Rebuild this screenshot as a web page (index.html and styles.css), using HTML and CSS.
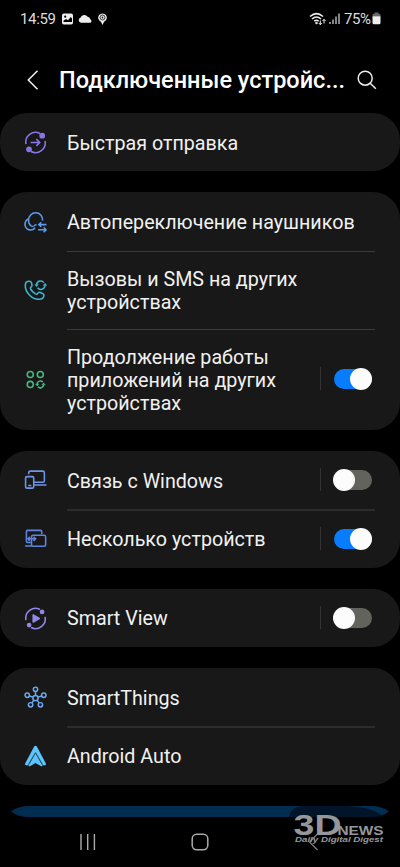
FILE: index.html
```html
<!DOCTYPE html>
<html lang="ru">
<head>
<meta charset="utf-8">
<title>Подключенные устройства</title>
<link rel="stylesheet" href="styles.css">
</head>
<body>
<div class="screen">
  <div class="status">
    <span class="clock">14:59</span>
    <svg class="status-left" width="48" height="14" viewBox="0 0 48 14">
      <rect x="1" y="1.5" width="11" height="11" rx="1.8" fill="#eee"/>
      <circle cx="4.2" cy="4.7" r="1.1" fill="#000"/>
      <path d="M2.5 10V8.700L5 7l2 1.300L9.800 5l1.200 1.400V10Z" fill="#000"/>
      <path d="M20 10.800a2.600 2.600 0 0 1-.6-5 4 4 0 0 1 7.200-1 3 3 0 0 1 2.700 2.500a2 2 0 0 1 .2 3.500Z" fill="#eee"/>
      <path d="M41.500 13l-1.600-3.300a4.300 4.300 0 1 1 3.200 0Z" fill="#eee"/>
      <circle cx="41.500" cy="5.500" r="2.500" fill="none" stroke="#222" stroke-width=".9"/>
      <circle cx="41.500" cy="5.500" r=".9" fill="#222"/>
    </svg>
    <svg class="status-right" width="33" height="14" viewBox="0 0 33 14" fill="none" stroke="#eee" stroke-width="1.500">
      <path d="M1 4.500Q7.500-1.200 14 4.500M3 7Q7.500 3 12 7M5.200 9.200Q7.500 7.300 9.700 9.200"/>
      <circle cx="7.500" cy="11" r=".5"/>
      <path d="M11.300 8.500v4M9.800 11l1.500 1.700 1.500-1.700M15 11.500v-4M13.500 9l1.500-1.700L16.500 9" stroke-width="1"/>
      <path d="M21 12v-2M24 12V7.500M27 12V4.500M30 12V1.500" stroke-width="1.400" stroke="#bbb"/>
    </svg>
    <span class="percent">75%</span>
    <svg class="battery" width="9" height="13" viewBox="0 0 9 13">
      <path d="M.5 4.500V3Q.5 1.800 2 1.800h.5V.5h4v1.300H7Q8.500 1.800 8.500 3v1.500Z" fill="#666"/>
      <path d="M.5 4.300h8v6.500Q8.500 12.300 7 12.300H2Q.5 12.300.5 10.800Z" fill="#eee"/>
    </svg>
  </div>

  <header class="header">
    <svg width="12" height="20" viewBox="0 0 12 20" fill="none" stroke="#f2f2f2" stroke-width="1.500"><path d="M10.500.8 1.300 10l9.200 9.200"/></svg>
    <h1>Подключенные устройс...</h1>
    <svg class="search" width="20" height="20" viewBox="0 0 20 20" fill="none" stroke="#eee" stroke-width="1.500"><circle cx="8.200" cy="8.200" r="7"/><path d="m13.200 13.200 5.600 5.600"/></svg>
  </header>

  <main class="groups">
    <section class="card">
      <div class="row">
        <svg class="icon" viewBox="0 0 22 22" fill="none" stroke="#8a74e8" stroke-width="1.500"><path d="M15.300 2.400A9.300 9.300 0 0 0 1.900 12.500M6.700 19.600A9.300 9.300 0 0 0 20.100 9.500M6.300 11h8.500M11.800 7.800 15 11l-3.200 3.200"/><circle cx="17.400" cy="4.500" r="2" fill="#8a74e8"/><circle cx="4.800" cy="17.500" r="2" fill="#8a74e8"/></svg>
        <span class="label">Быстрая отправка</span>
      </div>
    </section>

    <section class="card">
      <div class="row">
        <svg class="icon" viewBox="0 0 22 22" fill="none" stroke="#5c9bea" stroke-width="1.500"><path d="M17.800 9.200C18 4.800 15 1.700 11.200 1.700S4.300 4.800 4.300 9c0 2.200.7 4 2.200 5.100 1 .8 1.900.8 2.600.8M4.600 7.400C2.300 8.300.8 10.500 1 13.300c.2 3 2.500 4.900 5.300 4.900 2 0 3.400-.9 4.300-2.200M9.500 14.600c.5-1 1.300-1.500 2.500-1.500M21.500 13h-7M16.500 10.700 14.200 13l2.300 2.300M13.500 18h7.300M18.800 15.700l2.300 2.300-2.300 2.300"/></svg>
        <span class="label">Автопереключение наушников</span>
      </div>
      <div class="row calls">
        <svg class="icon" viewBox="0 0 22 22" fill="none" stroke="#41b5cf" stroke-width="1.500"><path d="M5.300 2.200C3.300 1.700 1.300 3.200 1.200 5.700c-.2 7.500 7 14.100 13.300 13.700 2.600-.2 4.300-1.800 4.600-3.600.1-1-.5-1.600-1.400-2l-2.200-.9c-1.500-.6-2 .1-2.600 1.100-.5.8-1.200.8-2 .3-2-1.200-3.500-2.700-4.500-4.500-.5-.9-.4-1.500.3-2 1-.7 1.300-1.200.9-2.500l-.6-1.900c-.2-.7-.8-1.100-1.700-1.200Z"/><path d="M12 5.200a3.900 3.900 0 0 1 7-1.700M20 6.200a3.900 3.900 0 0 1-7 2.200"/><path d="m10.300 5.300 1.700 2 1.700-2ZM18.400 6.100l1.700-2 1.700 2Z" fill="#41b5cf" stroke-width=".5"/></svg>
        <span class="label">Вызовы и SMS на других<br>устройствах</span>
      </div>
      <div class="row continue">
        <svg class="icon" viewBox="0 0 22 22" fill="none" stroke="#43ba81" stroke-width="1.500"><circle cx="6" cy="6.200" r="2.900"/><circle cx="15.600" cy="6.200" r="2.900"/><circle cx="6" cy="15.700" r="2.900"/><path d="M12.500 15.200a3.200 3.200 0 0 1 5.500-1.800M18.800 16.200a3.200 3.200 0 0 1-5.500 1.800"/><path d="m11 15.300 1.600 1.900 1.600-1.900ZM17.100 16.100l1.600-1.900 1.600 1.900Z" fill="#43ba81" stroke-width=".5"/></svg>
        <span class="label">Продолжение работы<br>приложений на других<br>устройствах</span>
        <span class="toggle on"><i></i></span>
      </div>
    </section>

    <section class="card">
      <div class="row">
        <svg class="icon" viewBox="0 0 22 22" fill="none" stroke="#7095e7" stroke-width="1.500"><path d="M4.500 5V3.500Q4.500 2 6 2h12q1.500 0 1.500 1.500v7.700q0 1.500-1.500 1.500H9.500M9.500 15.300h12"/><rect x="1.500" y="7.300" width="7.800" height="11" rx="1.400"/><path d="M4 15.800h3"/></svg>
        <span class="label">Связь с Windows</span>
        <span class="toggle"><i></i></span>
      </div>
      <div class="row thick">
        <svg class="icon" viewBox="0 0 22 22" fill="none" stroke="#5f83df" stroke-width="1.500"><path d="M17 6V3.500Q17 2.300 15.800 2.300H3.500Q2.300 2.300 2.300 3.500v9.200q0 1.200 1.200 1.200h3M1 17.200h6.500"/><rect x="7.200" y="7" width="13.500" height="10.500" rx="1.500"/><path d="M4 10.300h7.500M5.600 8.300 3.700 10.300l1.900 2M9.200 8.300l1.900 2-1.900 2"/></svg>
        <span class="label">Несколько устройств</span>
        <span class="toggle on"><i></i></span>
      </div>
    </section>

    <section class="card">
      <div class="row">
        <svg class="icon" viewBox="0 0 22 22" fill="none" stroke="#9087e8" stroke-width="1.500"><path d="M15.300 2.400A9.300 9.300 0 0 0 1.900 12.500M6.700 19.600A9.300 9.300 0 0 0 20.100 9.500"/><circle cx="17.300" cy="4.700" r="1.500" fill="#9087e8"/><circle cx="4.900" cy="17.300" r="1.500" fill="#9087e8"/><path d="M8.800 7.600v6.800L14.600 11Z" fill="#9087e8" stroke-linejoin="round"/></svg>
        <span class="label">Smart View</span>
        <span class="toggle"><i></i></span>
      </div>
    </section>

    <section class="card">
      <div class="row">
        <svg class="icon" viewBox="0 0 22 22" fill="none" stroke="#6faaf0" stroke-width="1.400"><circle cx="11" cy="11.500" r="2.500"/><circle cx="11" cy="3.200" r="2.100"/><circle cx="3.100" cy="8.800" r="2.100"/><circle cx="18.900" cy="8.800" r="2.100"/><circle cx="6.300" cy="18" r="2.100"/><circle cx="15.700" cy="18" r="2.100"/><path d="M11 5.300V9M5.200 9.500l3.400 1.100M16.800 9.500l-3.400 1.100M7.500 16.200l2-2.700M14.500 16.200l-2-2.700"/></svg>
        <span class="label">SmartThings</span>
      </div>
      <div class="row thick">
        <svg class="icon" viewBox="0 0 22 22"><path d="M9.700 1.500Q11-.2 12.300 1.500l8.500 16q.7 1.500-.8 1.800H18L11 7.500 4 19.300H2Q.5 19 1.200 17.500Z" fill="#5cc3fb"/><path d="m11 8 6.800 11.800q-.6 1-1.800.4L11 17.200l-5 3q-1.200.6-1.800-.4Z" fill="#5cc3fb"/><path d="M4.400 18.500 11 7.300l6.600 11.200" fill="none" stroke="#17465c" stroke-width=".8"/></svg>
        <span class="label">Android Auto</span>
      </div>
    </section>
    <svg class="tip" width="378" height="11" viewBox="0 0 378 11"><path d="M0 5.500Q7 0 18 0H360q11 0 18 5.500Q371 11 360 11H18Q7 11 0 5.500Z" fill="#002d50"/></svg>
  </main>

  <nav class="nav">
    <svg width="16" height="16" viewBox="0 0 16 16" stroke="#aaa" stroke-width="1.400"><path d="M1 0v16M7.700 0v16M14.400 0v16"/></svg>
    <svg width="18" height="18" viewBox="0 0 18 18" fill="none" stroke="#aaa" stroke-width="1.500"><rect x="1.200" y="1.200" width="15.600" height="15.600" rx="4.500"/></svg>
    <svg width="11" height="18" viewBox="0 0 11 18" fill="none" stroke="#777" stroke-width="1.400"><path d="M9.500 1 1.500 9l8 8"/></svg>
  </nav>
  <svg class="watermark" width="110" height="50" viewBox="0 0 110 50">
    <path d="M0 13Q2 2 15 2h43q22 0 38 11H0Z" fill="#000914" opacity=".65"/>
    <g fill="#94979b">
      <text class="logo" transform="translate(4.500 30.500) scale(1.500 1)" font-size="30" textLength="32" lengthAdjust="spacingAndGlyphs">3D</text>
      <text class="news" x="48.500" y="30.500" font-size="13" textLength="46" lengthAdjust="spacingAndGlyphs">NEWS</text>
      <text class="motto" x="6" y="37.800" font-size="8" textLength="88" lengthAdjust="spacingAndGlyphs">Daily Digital Digest</text>
    </g>
  </svg>
</div>
</body>
</html>
```
FILE: styles.css
```css
* { box-sizing: border-box; }
body { margin: 0; background: #000; color: #f1f1f1; font-family: Roboto, sans-serif; }
.screen { position: relative; width: 400px; height: 867px; overflow: hidden; background: #000; display: flex; flex-direction: column; }
.status { height: 37px; display: flex; align-items: center; padding: 0 19px 0 20px; font-size: 15px; color: #ddd; }
.clock { width: 36px; letter-spacing: -0.35px; }
.status-left { margin-left: 5px; }
.status-right { margin-left: auto; margin-right: 1px; }
.percent { width: 27px; margin-left: 1px; letter-spacing: -0.4px; white-space: nowrap; }
.battery { margin-left: 1px; }
.header { height: 76px; display: flex; align-items: center; padding: 9px 23px 0 27px; }
.header h1 { width: 287px; margin: 1px 0 0 20px; font-size: 23.5px; line-height: 30px; font-weight: 500; color: #fff; white-space: nowrap; }
.search { margin-left: auto; }
.groups { display: flex; flex-direction: column; gap: 21px; height: 704px; }
.card { flex: none; border-radius: 27px; background: #181818; }
.row { position: relative; height: 58.45px; display: flex; align-items: center; padding: 0 28px 0 24px; }
.row + .row::before { content: ""; position: absolute; left: 67px; right: 25px; top: 0; height: 1px; background: #3b3b3b; }
.row.thick::before { top: -0.3px; height: 2px; background: #2c2c2c; }
.icon { width: 23px; height: 23px; margin-top: 1px; flex: none; }
.label { margin: 2px 0 0 20px; font-size: 19.7px; line-height: 23px; white-space: nowrap; }
.calls { height: 78px; }
.continue { height: 101px; }
.toggle { position: relative; width: 38px; height: 20px; margin-left: auto; border-radius: 10px; background: #63635d; }
.toggle::before { content: ""; position: absolute; left: -14px; top: -2px; width: 1px; height: 23px; background: #343434; }
.toggle i { position: absolute; left: -1px; top: -1px; width: 22px; height: 22px; border-radius: 50%; background: #fcfcfc; }
.toggle.on { background: #087cff; }
.toggle.on i { left: 16px; }
.tip { flex: none; margin-left: 11px; }
.nav { height: 49px; display: grid; grid-template-columns: 176px 48px 178px; align-items: center; justify-items: center; }
.watermark { position: absolute; left: 289px; top: 804px; }
.logo, .news { font-family: "Liberation Sans", sans-serif; font-weight: bold; }
.motto { font-style: italic; font-family: "Liberation Sans", sans-serif; font-weight: bold; }
```
